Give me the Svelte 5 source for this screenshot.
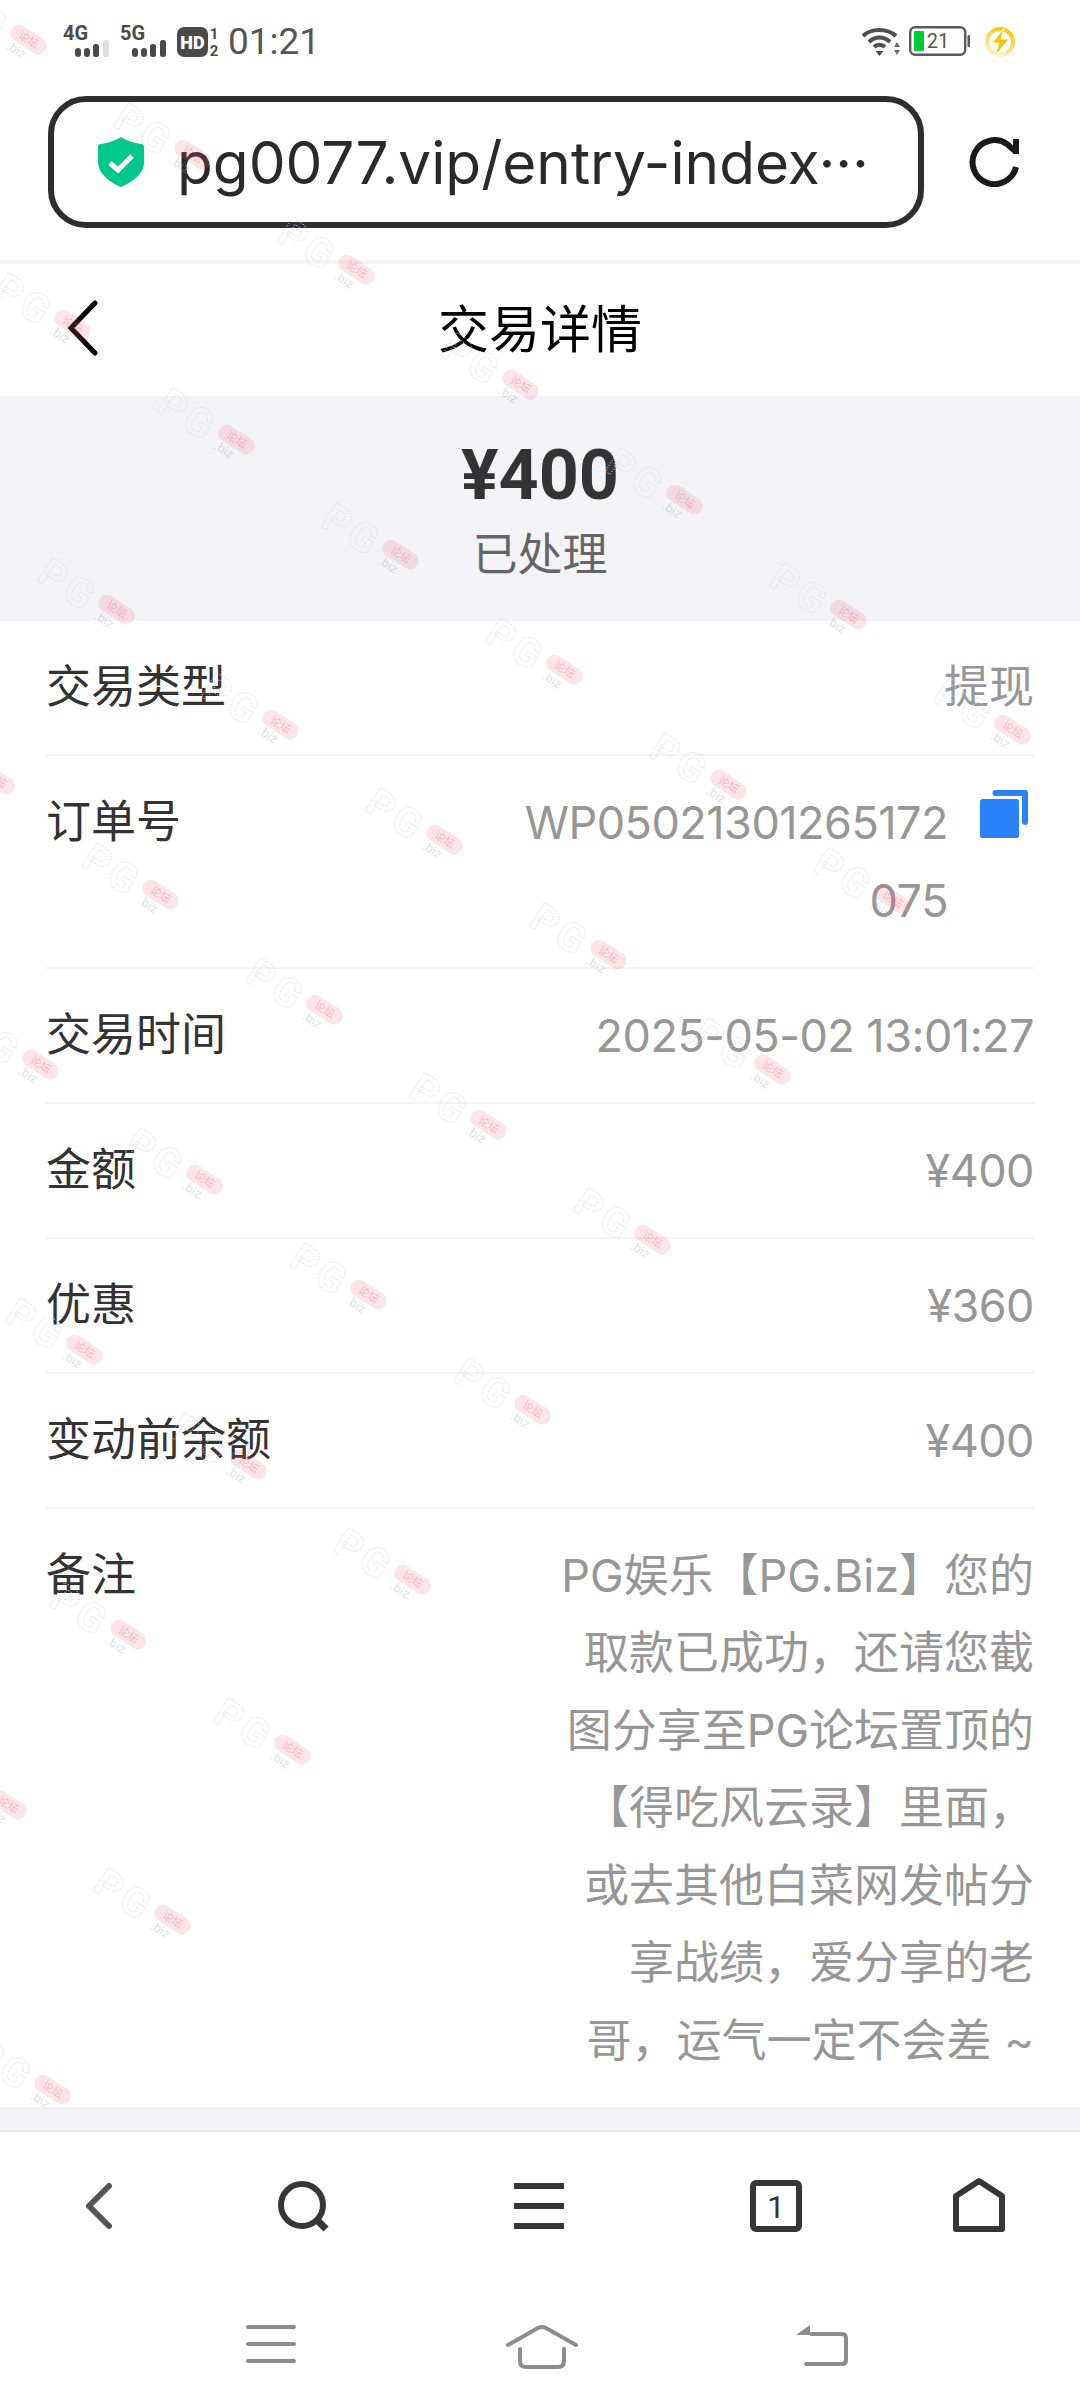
<script>
  // watermark tiles follow a skewed lattice, cut off on the right side
  const marks = [];
  for (let m = -1; m <= 7; m++) {
    for (let n = -2; n <= 4; n++) {
      const x = 202 + n * 164 - m * 120;
      const y = 425 + n * 115 + m * 170;
      if (x > -70 && x < 1150) marks.push({ x: x - 65, y: y - 50 });
    }
  }

  const rows = [
    { label: '交易类型', value: '提现' },
    { label: '订单号', value: 'WP05021301265172075', copy: true },
    { label: '交易时间', value: '2025-05-02 13:01:27', num: true },
    { label: '金额', value: '¥400', num: true },
    { label: '优惠', value: '¥360', num: true },
    { label: '变动前余额', value: '¥400', num: true },
    {
      label: '备注',
      value: 'PG娱乐【PG.Biz】您的取款已成功，还请您截图分享至PG论坛置顶的【得吃风云录】里面，或去其他白菜网发帖分享战绩，爱分享的老哥，运气一定不会差 ~',
      long: true
    }
  ];
</script>

<div class="page">
  <div class="status">
    <svg class="signal" width="48" height="36" viewBox="0 -4 48 36">
      <text x="0" y="15" class="net">4G</text>
      <rect x="12" y="23" width="6" height="9" rx="3" fill="#4a4a4a" />
      <rect x="21" y="23" width="6" height="9" rx="3" fill="#4a4a4a" />
      <rect x="30" y="19" width="6" height="13" rx="2.5" fill="#4a4a4a" />
      <rect x="40" y="15" width="6" height="17" rx="2.5" fill="#dedede" />
    </svg>
    <svg class="signal" width="48" height="36" viewBox="0 -4 48 36">
      <text x="0" y="15" class="net">5G</text>
      <rect x="12" y="23" width="6" height="9" rx="3" fill="#4a4a4a" />
      <rect x="21" y="23" width="6" height="9" rx="3" fill="#4a4a4a" />
      <rect x="30" y="19" width="6" height="13" rx="2.5" fill="#4a4a4a" />
      <rect x="40" y="15" width="6" height="17" rx="2.5" fill="#4a4a4a" />
    </svg>
    <svg class="hd" width="43" height="38" viewBox="0 0 43 38">
      <rect x="0" y="2" width="31" height="30" rx="7" fill="#4a4a4a" />
      <text x="15.5" y="23.500" text-anchor="middle" class="hd-text">HD</text>
      <text x="37" y="14" text-anchor="middle" class="sim">1</text>
      <text x="37" y="31" text-anchor="middle" class="sim">2</text>
    </svg>
    <span class="time">01:21</span>
    <span class="spacer"></span>
    <svg class="wifi" width="40" height="30" viewBox="0 0 40 30" fill="none" stroke="#4f4f4f" stroke-width="4">
      <path d="M2 9 C10 1 26 1 35 9" />
      <path d="M8 15 C14 9 23 9 29 15" />
      <path d="M13 20 C16 17 21 17 24 20" />
      <path d="M14.5 24 H22.5 L18.5 29 Z" fill="#4f4f4f" stroke="none" />
      <path d="M33 20 L36 15 L39 20 Z M33 23 H39 L36 28 Z" fill="#6a6a6a" stroke="none" />
    </svg>
    <svg class="battery" width="62" height="32" viewBox="0 0 62 32">
      <rect x="1.2" y="2.2" width="55" height="27.6" rx="5" fill="#fff" stroke="#5a5a5a" stroke-width="2.4" />
      <rect x="5" y="6" width="10" height="20" rx="1" fill="#00cc33" />
      <text x="29" y="23" text-anchor="middle" class="batt-text">21</text>
      <rect x="58.5" y="10" width="2.5" height="12" rx="1" fill="#5a5a5a" />
    </svg>
    <svg class="bolt" width="32" height="32" viewBox="0 0 32 32">
      <defs>
        <linearGradient id="boltRing" x1="0.7" y1="0" x2="0.3" y2="1">
          <stop offset="0" stop-color="#ffc400" />
          <stop offset="1" stop-color="#fff3c4" />
        </linearGradient>
      </defs>
      <circle cx="16" cy="17" r="13" fill="none" stroke="url(#boltRing)" stroke-width="4" />
      <path d="M20 3 L8 18 H15 L11 31 L25 14 H17 Z" fill="#ffc400" stroke="#fff" stroke-width="1" />
    </svg>
  </div>

  <div class="browser">
    <div class="address">
      <svg width="46" height="50" viewBox="0 0 46 50">
        <path d="M23 0 C27 3 36 6 43 7 C45 7 46 8 46 10 V25 C46 37 33 46 23 50 C13 46 0 37 0 25 V10 C0 8 1 7 3 7 C10 6 19 3 23 0 Z" fill="#00c78c" />
        <path d="M12 26 L20 33 L34 19" fill="none" stroke="#fff" stroke-width="5" />
      </svg>
      <span class="url">pg0077.vip/entry-index···</span>
    </div>
    <svg class="reload" width="50" height="50" viewBox="0 0 50 50" fill="none" stroke="#1a1a1a" stroke-width="6">
      <path d="M47 30 A22 22 0 1 1 38 7 L46 14" />
      <path d="M47 2 V17" />
    </svg>
  </div>

  <div class="topbar">
    <svg class="topback" width="30" height="56" viewBox="0 0 30 56" fill="none" stroke="#000" stroke-width="5" stroke-linecap="round">
      <path d="M27 3 L3 28 L27 53" />
    </svg>
    <span class="title">交易详情</span>
  </div>

  <div class="hero">
    <div class="amount">¥400</div>
    <div class="state">已处理</div>
  </div>

  <div class="list">
    {#each rows as row}
      <div class="row">
        <span class="label">{row.label}</span>
        {#if row.copy}
          <span class="order">
            <span class="value num order-no">{row.value}</span>
            <svg class="copy" width="48" height="48" viewBox="0 0 48 48">
              <rect x="0" y="9" width="39" height="39" rx="2.5" fill="#2a82ff" />
              <path d="M15 0 H45 C47 0 48 1 48 3 V32 C48 34 47 35 45.5 35 C43.500 35 42 34 42 32 V6 H15 C13 6 12.500 4.500 12.500 3 C12.500 1 13 0 15 0 Z" fill="#2a82ff" />
            </svg>
          </span>
        {:else}
          <span class="value" class:long={row.long} class:num={row.num}>{row.value}</span>
        {/if}
      </div>
    {/each}
  </div>

  <div class="gap"></div>

  <div class="toolbar">
    <svg width="60" height="60" viewBox="0 0 60 60" fill="none" stroke="#555" stroke-width="6" stroke-linecap="round" stroke-linejoin="round">
      <path d="M40 10 L20 30 L40 50" />
    </svg>
    <svg width="60" height="60" viewBox="0 0 60 60" fill="none" stroke="#363636" stroke-width="6">
      <circle cx="29" cy="29" r="21" />
      <path d="M44 44 L53 53" stroke-width="7" />
    </svg>
    <svg width="60" height="60" viewBox="0 0 60 60" fill="#363636">
      <rect x="5" y="7" width="50" height="6" />
      <rect x="5" y="27" width="50" height="6" />
      <rect x="5" y="47" width="50" height="6" />
    </svg>
    <svg width="60" height="60" viewBox="0 0 60 60" fill="none" stroke="#363636" stroke-width="6">
      <rect x="7" y="7" width="46" height="46" rx="3" />
      <text x="30" y="42" text-anchor="middle" class="tab-count">1</text>
    </svg>
    <svg width="60" height="60" viewBox="0 0 60 60" fill="none" stroke="#363636" stroke-width="6" stroke-linejoin="round">
      <path d="M7 20 L30 5 L53 20 V53 H7 Z" />
    </svg>
  </div>

  <div class="softkeys">
    <svg width="50" height="40" viewBox="0 0 50 40" stroke="#8c8c8c" stroke-width="4" stroke-linecap="round">
      <path d="M2 2 H48 M2 19 H48 M2 36 H48" />
    </svg>
    <svg width="72" height="44" viewBox="0 0 72 44" fill="none" stroke="#8c8c8c" stroke-width="4" stroke-linecap="round">
      <path d="M2 20 L32 3 Q36 1 40 3 L70 20" />
      <path d="M14 24 V36 Q14 42 20 42 H52 Q58 42 58 36 V24" />
    </svg>
    <svg width="52" height="42" viewBox="0 0 52 42" fill="none" stroke="#8c8c8c" stroke-width="4" stroke-linecap="round">
      <path d="M15 9 H46 Q50 9 50 13 V35 Q50 39 46 39 H10" />
      <path d="M14 0 V10 H0 Z" fill="#8c8c8c" stroke="none" />
    </svg>
  </div>

  <div class="marks">
    {#each marks as mark}
      <svg class="mark" width="130" height="100" viewBox="-65 -50 130 100" style="left: {mark.x}px; top: {mark.y}px">
        <g transform="rotate(33)">
          <text x="-17" y="13" text-anchor="middle" class="mark-pg">PG</text>
          <rect x="17" y="-15" width="40" height="17" rx="8.500" class="mark-pillbg" />
          <text x="37" y="-2.500" text-anchor="middle" class="mark-pill">论坛</text>
          <text x="22" y="13" class="mark-biz">.biz</text>
        </g>
      </svg>
    {/each}
  </div>
</div>

<style>
  :global(body) {
    margin: 0;
    background: #fff;
  }

  .page {
    position: relative;
    width: 1080px;
    height: 2408px;
    overflow: hidden;
    background: #fff;
    font-family: Roboto, "Noto Sans CJK SC", sans-serif;
    color: #333;
  }

  .status {
    display: flex;
    align-items: flex-start;
    box-sizing: border-box;
    height: 96px;
    padding: 25px 64px 0 63px;
  }

  .signal {
    margin: -4px 9px 0 0;
  }

  .net {
    font: 700 20px Roboto, sans-serif;
    fill: #4a4a4a;
  }

  .hd {
    margin: 0 8px 0 0;
  }

  .hd-text {
    font: 900 18px Roboto, sans-serif;
    fill: #fff;
  }

  .sim {
    font: 700 15px Roboto, sans-serif;
    fill: #4a4a4a;
  }

  .time {
    font-size: 37px;
    line-height: 34px;
    color: #555;
  }

  .spacer {
    flex: 1;
  }

  .wifi {
    margin: 2px 8px 0 0;
  }

  .battery {
    margin: 0 13px 0 0;
  }

  .batt-text {
    font: 400 20px Roboto, sans-serif;
    fill: #555;
  }

  .browser {
    display: flex;
    align-items: flex-start;
    box-sizing: border-box;
    height: 168px;
    padding: 0 60px 0 48px;
    border-bottom: 4px solid #f5f5f5;
  }

  .address {
    display: flex;
    align-items: center;
    gap: 33px;
    box-sizing: border-box;
    width: 876px;
    height: 132px;
    padding-left: 44px;
    border: 6px solid #2e2e2e;
    border-radius: 38px;
  }

  .url {
    font: 400 58.5px Inter, sans-serif;
    color: #2a2a2a;
    white-space: nowrap;
  }

  .reload {
    margin: 41px 0 0 45px;
  }

  .topbar {
    position: relative;
    display: flex;
    align-items: center;
    justify-content: center;
    height: 132px;
  }

  .topback {
    position: absolute;
    left: 68px;
    top: 36px;
  }

  .title {
    padding-bottom: 8px;
    font-size: 51px;
    color: #000;
  }

  .hero {
    height: 225px;
    box-sizing: border-box;
    padding-top: 37px;
    background: #f3f3f8;
    text-align: center;
  }

  .amount {
    font-size: 70px;
    font-weight: 700;
    line-height: 84px;
    color: #333;
  }

  .state {
    margin-top: 9px;
    font-size: 45px;
    line-height: 60px;
    color: #666;
  }

  .list {
    padding: 0 46px;
  }

  .row {
    display: flex;
    justify-content: space-between;
    padding: 28px 0 27.5px;
    border-bottom: 2px solid #f5f5f5;
    font-size: 45px;
    line-height: 77.5px;
  }

  .row:last-child {
    border-bottom: 0;
  }

  .label {
    flex: none;
    color: #333;
  }

  .value {
    color: #979797;
    text-align: right;
  }

  .num {
    font-family: Inter, sans-serif;
    letter-spacing: -0.5px;
  }

  .long {
    width: 480px;
    font-family: Inter, "Noto Sans CJK SC", sans-serif;
  }

  .order {
    display: flex;
    align-items: flex-start;
  }

  .order-no {
    width: 440px;
    word-break: break-all;
  }

  .copy {
    margin: 6px 6px 0 32px;
  }

  .gap {
    height: 25px;
    background: #f3f3f8;
    box-shadow: inset 0 -3px 2px -1px #e6e6ea;
  }

  .toolbar {
    display: grid;
    grid-template-columns: 204px 236px 237px 203px 60px;
    padding: 44px 0 0 69px;
    height: 130px;
  }

  .tab-count {
    font: 400 32px Roboto, sans-serif;
    fill: #363636;
    stroke: none;
  }

  .softkeys {
    display: grid;
    grid-template-columns: 260px 290px 52px;
    align-items: start;
    padding: 19px 0 0 246px;
  }

  .marks {
    position: absolute;
    left: 0;
    top: 0;
    width: 1080px;
    height: 2133px;
    overflow: hidden;
    pointer-events: none;
  }

  .mark {
    position: absolute;
  }

  .mark-pg {
    font: 700 40px Roboto, sans-serif;
    letter-spacing: 4px;
    fill: none;
    stroke: #d8d8e4;
    stroke-width: 1;
    stroke-dasharray: 1.2 1.6;
    opacity: 0.8;
  }

  .mark-pillbg {
    fill: rgba(240, 90, 110, 0.16);
  }

  .mark-pill {
    font: 400 11px "Noto Sans CJK SC", sans-serif;
    fill: rgba(200, 80, 100, 0.3);
  }

  .mark-biz {
    font: 400 13px Roboto, sans-serif;
    fill: rgba(150, 150, 170, 0.3);
  }
</style>
